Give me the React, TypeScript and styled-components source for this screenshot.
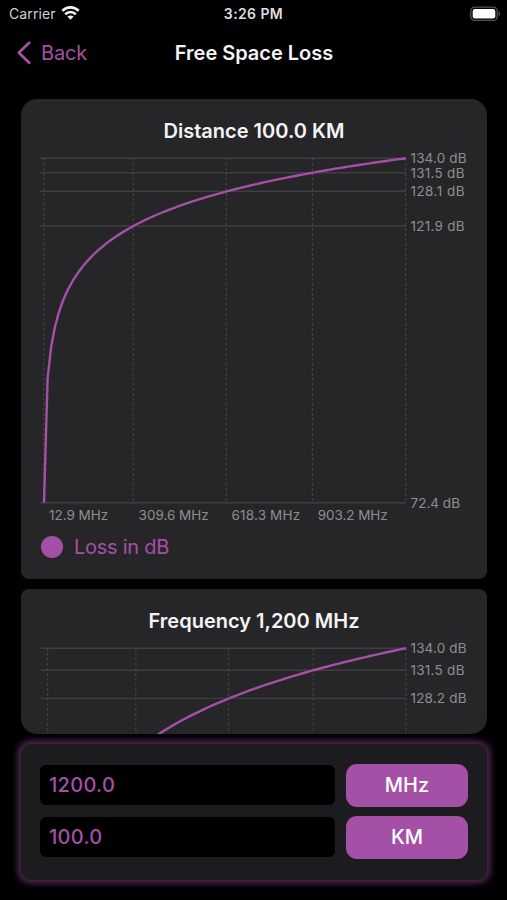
import React from "react";
import styled, { createGlobalStyle } from "styled-components";

const ACCENT = "#a550a7";

const GlobalStyle = createGlobalStyle`
  * { box-sizing: border-box; }
  body {
    margin: 0;
    background: #000;
    font-family: Inter, "Liberation Sans", sans-serif;
  }
`;

const Screen = styled.div`
  width: 507px;
  height: 900px;
  overflow: hidden;
  background: #000;
  color: #f4f4f4;
  display: flex;
  flex-direction: column;
`;

const StatusBar = styled.header`
  height: 27px;
  flex: none;
  display: grid;
  grid-template-columns: 1fr auto 1fr;
  align-items: center;
  padding: 0 6px 0 9px;
`;

const Carrier = styled.div`
  display: flex;
  align-items: center;
  gap: 5px;
  font-size: 14px;
  letter-spacing: 0.1px;
  line-height: 20px;
  color: #d0d0d0;
`;

const Clock = styled.div`
  margin-left: -3px;
  font-size: 14px;
  font-weight: 600;
  line-height: 20px;
  letter-spacing: 0.4px;
  color: #dedede;
`;

const BatterySlot = styled.div`
  display: flex;
  justify-content: flex-end;
`;

const NavBar = styled.nav`
  height: 51px;
  flex: none;
  display: grid;
  grid-template-columns: 1fr auto 1fr;
  align-items: center;
  padding: 0 16px;
`;

const BackButton = styled.button`
  display: flex;
  align-items: center;
  gap: 9px;
  padding: 0;
  border: 0;
  background: none;
  color: ${ACCENT};
  font: 400 20px/26px Inter, sans-serif;
  letter-spacing: -0.2px;
`;

const NavTitle = styled.h1`
  margin: 0 0 0 1px;
  font-size: 20px;
  font-weight: 600;
  line-height: 26px;
  letter-spacing: -0.02px;
`;

const ScrollArea = styled.main`
  height: 635.5px;
  flex: none;
  margin: 20.5px 20px 0 21px;
  border-radius: 16px;
  overflow: hidden;
  display: flex;
  flex-direction: column;
  gap: 10px;
`;

const Card = styled.section`
  height: 480px;
  flex: none;
  border-radius: 8px;
  background: #262628;
  display: flex;
  flex-direction: column;
`;

const CardTitle = styled.h2`
  margin: 19.5px 0 0;
  font-size: 20px;
  font-weight: 600;
  line-height: 26px;
  letter-spacing: 0;
  text-align: center;
`;

const Plot = styled.svg`
  display: block;
  width: 466px;
  height: 384px;
  flex: none;

  text {
    fill: #8e8e92;
    font: 400 13.5px Inter, sans-serif;
  }
`;

const Legend = styled.div`
  display: flex;
  align-items: center;
  gap: 11px;
  padding-left: 20px;
  height: 38px;
  color: ${ACCENT};
  font-size: 20px;
  line-height: 26px;
  letter-spacing: -0.26px;
`;

const LegendDot = styled.span`
  width: 22px;
  height: 22px;
  border-radius: 50%;
  background: ${ACCENT};
`;

const InputPanel = styled.section`
  flex: none;
  width: 466px;
  height: 136px;
  margin: 10px 0 0 21px;
  padding: 19.5px 19px 0 19px;
  border-radius: 10px;
  background: #1c1c1e;
  box-shadow: 0 0 7px 3px rgba(165, 80, 167, 0.52);
  display: flex;
  flex-direction: column;
  gap: 9px;
  position: relative;
`;

const InputRow = styled.div`
  display: grid;
  grid-template-columns: 295px 122px;
  column-gap: 11px;
  align-items: center;
`;

const ValueField = styled.input`
  width: 100%;
  height: 40px;
  padding: 0 9px;
  border: 0;
  outline: 0;
  border-radius: 6px;
  background: #000;
  color: ${ACCENT};
  font: 500 20px Inter, sans-serif;
  letter-spacing: 0.3px;
`;

const UnitButton = styled.button`
  height: 43px;
  padding: 0;
  border: 0;
  border-radius: 11px;
  background: ${ACCENT};
  color: #fff;
  font: 500 20px Inter, sans-serif;
  letter-spacing: 0;
`;

type Tick = { at: number; label?: string; width?: number };

type ChartProps = {
  xMax: number;
  yMin: number;
  left: number;
  xTicks: Tick[];
  yTicks: Tick[];
};

const TOP = 14.2;
const BOTTOM = 358.7;
const RIGHT = 385;
const Y_MAX = 134.02;

/** Path loss relative to its maximum, sampled at 101 evenly spaced values. */
function lossPath(xMax: number, yMin: number, left: number) {
  const points: string[] = [];
  for (let i = 0; i <= 100; i++) {
    const value = 1 + ((xMax - 1) * i) / 100;
    const loss = Y_MAX + 20 * Math.log10(value / xMax);
    const x = left + ((RIGHT - left) * i) / 100;
    const y = TOP + ((Y_MAX - loss) / (Y_MAX - yMin)) * (BOTTOM - TOP);
    points.push(`${x.toFixed(2)},${y.toFixed(2)}`);
  }
  return `M${points.join("L")}`;
}

function LossChart({ xMax, yMin, left, xTicks, yTicks }: ChartProps) {
  return (
    <Plot viewBox="0 0 466 384">
      {yTicks.map((t) => (
        <g key={t.at}>
          <line x1={19.5} x2={RIGHT} y1={t.at} y2={t.at} stroke="#3f3f41" strokeWidth={1.4} />
          <text x={389.5} y={t.at + 4.8} textLength={t.width} lengthAdjust="spacing">{t.label}</text>
        </g>
      ))}
      {xTicks.map((t) => (
        <g key={t.at}>
          <line x1={t.at} x2={t.at} y1={TOP} y2={BOTTOM} stroke="#48484a" strokeWidth={1.2} strokeDasharray="2.3 2.7" />
          {t.label && <text x={t.at + 5.3} y={376.4} textLength={t.width} lengthAdjust="spacing">{t.label}</text>}
        </g>
      ))}
      <path d={lossPath(xMax, yMin, left)} fill="none" stroke={ACCENT} strokeWidth={2.4} strokeLinejoin="round" />
    </Plot>
  );
}

const WifiIcon = () => (
  <svg width="19" height="15" viewBox="0 0 19 15">
    <g fill="none" stroke="#f2f2f2" strokeWidth="2.7">
      <path d="M1.3 4.9C6 .3 13 .3 17.7 4.9" />
      <path d="M4.2 8.3C7.3 5.4 11.7 5.4 14.8 8.3" />
    </g>
    <path d="M6.4 10.6C8 9.2 11 9.2 12.6 10.6L9.5 13.8Z" fill="#f2f2f2" />
  </svg>
);

const BatteryIcon = () => (
  <svg width="31" height="16" viewBox="0 0 31 16">
    <rect x="0.8" y="1.2" width="26.4" height="13.2" rx="4" fill="#000" stroke="#555" strokeWidth="1.3" />
    <rect x="2.7" y="3.1" width="22.6" height="9.4" rx="2.2" fill="#fff" />
    <path d="M28.6 5.5C30.7 6.2 30.7 9.4 28.6 10.1Z" fill="#555" />
  </svg>
);

const BackChevron = () => (
  <svg width="16" height="24" viewBox="0 0 16 24">
    <path d="M13.2 1.8L2.8 11.8L13.2 21.8" fill="none" stroke={ACCENT} strokeWidth="2.7" strokeLinecap="round" strokeLinejoin="round" />
  </svg>
);

export default function App() {
  const [frequency, setFrequency] = React.useState("1200.0");
  const [distance, setDistance] = React.useState("100.0");

  return (
    <>
      <GlobalStyle />
      <Screen>
        <StatusBar>
          <Carrier>Carrier <WifiIcon /></Carrier>
          <Clock>3:26 PM</Clock>
          <BatterySlot><BatteryIcon /></BatterySlot>
        </StatusBar>
        <NavBar>
          <BackButton><BackChevron />Back</BackButton>
          <NavTitle>Free Space Loss</NavTitle>
        </NavBar>
        <ScrollArea>
          <Card>
            <CardTitle>Distance 100.0 KM</CardTitle>
            <LossChart
              xMax={1200}
              yMin={72.44}
              left={23}
              xTicks={[
                { at: 22.8, label: "12.9 MHz", width: 59 },
                { at: 112.3, label: "309.6 MHz", width: 70 },
                { at: 205.3, label: "618.3 MHz", width: 68.5 },
                { at: 291.5, label: "903.2 MHz", width: 70 },
                { at: 384.6 },
              ]}
              yTicks={[
                { at: 14.2, label: "134.0 dB", width: 56 },
                { at: 28.8, label: "131.5 dB", width: 54 },
                { at: 47.3, label: "128.1 dB", width: 54 },
                { at: 82, label: "121.9 dB", width: 54 },
                { at: 358.7, label: "72.4 dB", width: 49.5 },
              ]}
            />
            <Legend><LegendDot />Loss in dB</Legend>
          </Card>
          <Card>
            <CardTitle>Frequency 1,200 MHz</CardTitle>
            <LossChart
              xMax={100}
              yMin={94.02}
              left={26.5}
              xTicks={[{ at: 26.5 }, { at: 114.8 }, { at: 207.5 }, { at: 292.3 }, { at: 384.8 }]}
              yTicks={[
                { at: 14.2, label: "134.0 dB", width: 56 },
                { at: 36.2, label: "131.5 dB", width: 54 },
                { at: 64.4, label: "128.2 dB", width: 56 },
              ]}
            />
          </Card>
        </ScrollArea>
        <InputPanel>
          <InputRow>
            <ValueField value={frequency} onChange={(e) => setFrequency(e.target.value)} />
            <UnitButton>MHz</UnitButton>
          </InputRow>
          <InputRow>
            <ValueField value={distance} onChange={(e) => setDistance(e.target.value)} />
            <UnitButton>KM</UnitButton>
          </InputRow>
        </InputPanel>
      </Screen>
    </>
  );
}
